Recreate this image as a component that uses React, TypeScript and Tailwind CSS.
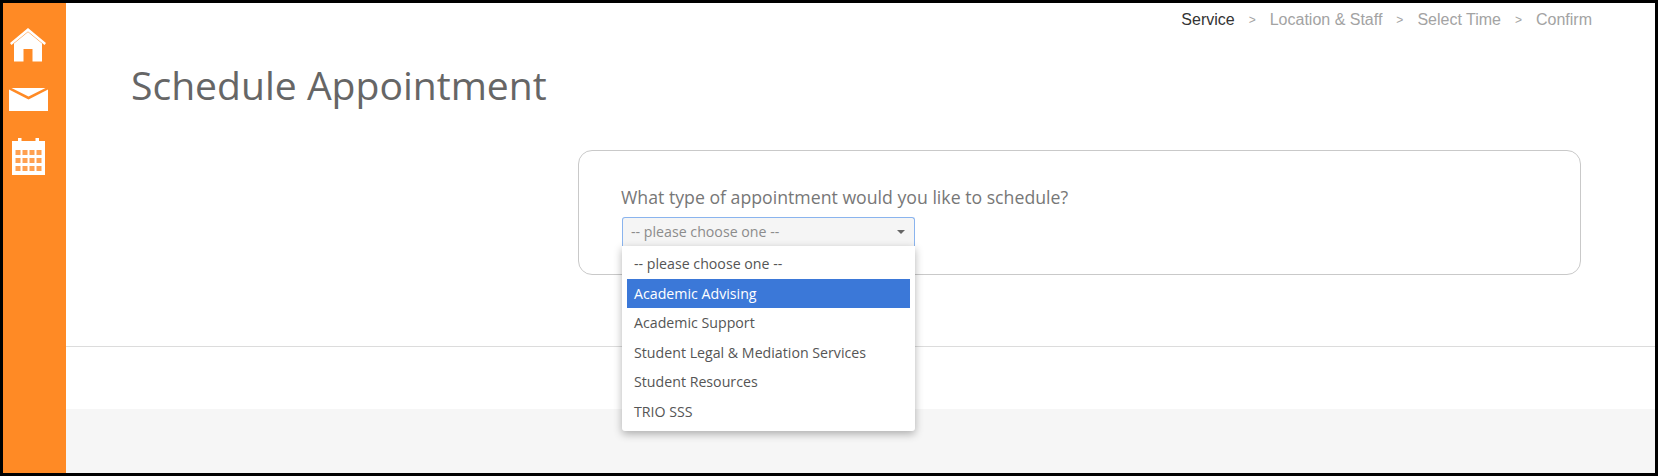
const options = [
  "-- please choose one --",
  "Academic Advising",
  "Academic Support",
  "Student Legal & Mediation Services",
  "Student Resources",
  "TRIO SSS",
];

const steps = ["Service", "Location & Staff", "Select Time", "Confirm"];

function HomeIcon() {
  return (
    <svg width="36" height="34" viewBox="0 0 36 34" fill="#fff">
      <path d="M18 0 L36 15 L34.5 17 L18 3.5 L1.5 17 L0 15 Z" />
      <path d="M18 4 L32 15.5 V33.5 H22.5 V21 H13.5 V33.5 H4 V15.5 Z" />
    </svg>
  );
}

function MailIcon() {
  return (
    <svg width="39" height="23" viewBox="0 0 39 23" fill="#fff">
      <path d="M0 1.5 L19.5 11.5 L39 1.5 V23 H0 Z" />
      <path d="M2.5 0 H36.5 L19.5 8.5 Z" />
    </svg>
  );
}

function CalendarIcon() {
  const cells = [];
  for (let r = 0; r < 3; r++) {
    for (let c = 0; c < 4; c++) {
      cells.push(<rect key={`${r}-${c}`} x={4.5 + c * 7} y={12 + r * 8} width="5" height="5" fill="#ffa050" />);
    }
  }
  return (
    <svg width="35" height="37" viewBox="0 0 35 37" fill="#fff">
      <rect x="1" y="3" width="33" height="34" />
      <rect x="7" y="0" width="3.5" height="5" />
      <rect x="24.5" y="0" width="3.5" height="5" />
      {cells}
    </svg>
  );
}

export default function App() {
  return (
    <div className="w-[1658px] h-[476px] border-[3px] border-black bg-white flex overflow-hidden font-['Open_Sans',sans-serif]">
      <aside className="w-[63px] shrink-0 bg-[#ff8a25] flex flex-col items-start pt-[25px]">
        <div className="ml-[7px]">
          <HomeIcon />
        </div>
        <div className="ml-[6px] mt-[26px]">
          <MailIcon />
        </div>
        <div className="ml-[8px] mt-[27px]">
          <CalendarIcon />
        </div>
      </aside>

      <main className="flex-1 flex flex-col min-w-0">
        <div className="h-[344px] border-b border-[#dcdcdc] flex flex-col">
          <nav className="h-[33px] pt-[1px] pr-[63px] flex justify-end items-center gap-[14px] font-['Liberation_Sans',sans-serif] text-[16px] text-[#a3a3a3]">
            {steps.map((step, i) => (
              <div key={step} className="flex items-center gap-[14px]">
                {i > 0 && <span className="text-[12px]">&gt;</span>}
                <span className={i === 0 ? "text-[#333]" : ""}>{step}</span>
              </div>
            ))}
          </nav>

          <h1 className="ml-[65px] mt-[24px] text-[39.1px] leading-[50px] text-[#666]">Schedule Appointment</h1>

          <div className="ml-[512px] mt-[40px] w-[1003px] h-[125px] border border-[#c9c9c9] rounded-[14px] pl-[42px] pt-[33px]">
            <p className="text-[17.7px] leading-[24px] text-[#777] mt-[1px]">What type of appointment would you like to schedule?</p>

            <div className="relative mt-[8px] ml-[1px] w-[293px]">
              <div className="h-[29px] bg-[#f5f5f5] border border-[#8ab4ee] border-b-0 rounded-t-[3px] pl-[8px] pr-[9px] flex items-center justify-between text-[14.2px] text-[#8c8c8c]">
                <span>-- please choose one --</span>
                <span className="w-0 h-0 border-x-[4px] border-x-transparent border-t-[4px] border-t-[#666]" />
              </div>

              <ul className="absolute left-0 top-[29px] w-full h-[185px] bg-white rounded-b-[3px] shadow-[0_3px_8px_rgba(0,0,0,0.3)] px-[5px] pt-[3px] z-10">
                {options.map((option, i) => (
                  <li
                    key={option}
                    className={`h-[29.5px] flex items-center text-[14.2px] px-[7px] ${
                      i === 1 ? "bg-[#3b78d8] text-white" : "text-[#555]"
                    }`}
                  >
                    {option}
                  </li>
                ))}
              </ul>
            </div>
          </div>
        </div>

        <div className="h-[62px] bg-white" />
        <div className="flex-1 bg-[#f6f6f6]" />
      </main>
    </div>
  );
}
